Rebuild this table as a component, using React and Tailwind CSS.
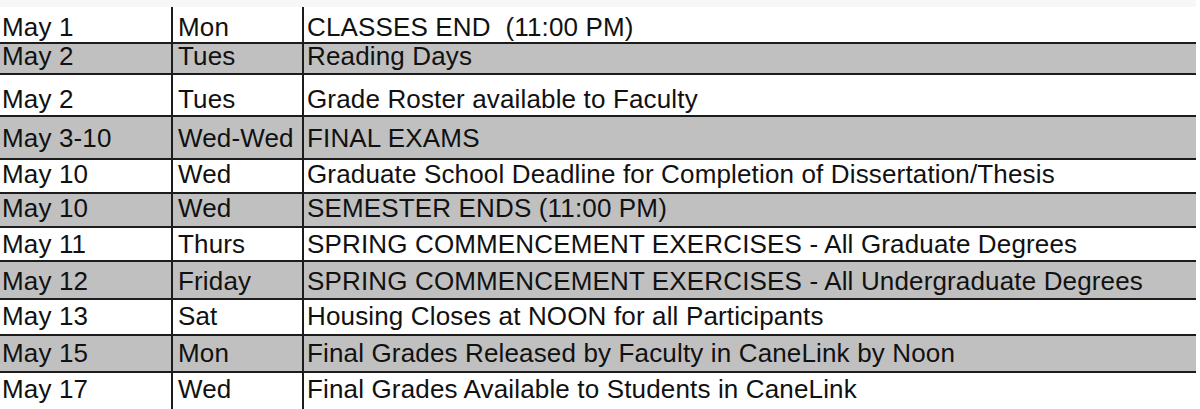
const rows = [
  { date: "May 1", day: "Mon", text: "CLASSES END  (11:00 PM)", gray: false, h: "h-[37px]", pb: "pb-[5px]" },
  { date: "May 2", day: "Tues", text: "Reading Days", gray: true, h: "h-[31px]", pb: "pb-[7px]" },
  { date: "May 2", day: "Tues", text: "Grade Roster available to Faculty", gray: false, h: "h-[42px]", pb: "pb-[6px]" },
  { date: "May 3-10", day: "Wed-Wed", text: "FINAL EXAMS", gray: true, h: "h-[43px]", pb: "pb-[10px]" },
  { date: "May 10", day: "Wed", text: "Graduate School Deadline for Completion of Dissertation/Thesis", gray: false, h: "h-[34px]", pb: "pb-[8px]" },
  { date: "May 10", day: "Wed", text: "SEMESTER ENDS (11:00 PM)", gray: true, h: "h-[34px]", pb: "pb-[8px]" },
  { date: "May 11", day: "Thurs", text: "SPRING COMMENCEMENT EXERCISES - All Graduate Degrees", gray: false, h: "h-[34px]", pb: "pb-[6px]" },
  { date: "May 12", day: "Friday", text: "SPRING COMMENCEMENT EXERCISES - All Undergraduate Degrees", gray: true, h: "h-[38px]", pb: "pb-[7px]" },
  { date: "May 13", day: "Sat", text: "Housing Closes at NOON for all Participants", gray: false, h: "h-[36px]", pb: "pb-[8px]" },
  { date: "May 15", day: "Mon", text: "Final Grades Released by Faculty in CaneLink by Noon", gray: true, h: "h-[37px]", pb: "pb-[8px]" },
  { date: "May 17", day: "Wed", text: "Final Grades Available to Students in CaneLink", gray: false, h: "h-[36px]", pb: "pb-[10px]" },
];

export default function App() {
  return (
    <div className="h-[409px] w-[1200px] overflow-hidden bg-white font-['Liberation_Sans',Arial,sans-serif] text-[26px] leading-[20px] tracking-[0.15px] text-[#111]">
      <div className="h-[7px] w-[1196px] bg-[#f7f7f7]" />
      <div className="w-[1196px]">
        {rows.map((r, i) => (
          <div
            key={i}
            className={`flex ${r.h} ${r.gray ? "bg-[#c0c0c0]" : "bg-white"} ${
              i < rows.length - 1 ? "border-b-2 border-[#1c1c1c]" : ""
            }`}
          >
            <div className={`flex w-[171px] items-end pl-[2px] ${r.pb}`}>{r.date}</div>
            <div className={`flex w-[131px] items-end border-l-2 border-[#1c1c1c] pl-[5px] ${r.pb}`}>{r.day}</div>
            <div className={`flex flex-1 items-end whitespace-pre border-l-2 border-[#1c1c1c] pl-[3px] ${r.pb}`}>{r.text}</div>
          </div>
        ))}
      </div>
    </div>
  );
}
